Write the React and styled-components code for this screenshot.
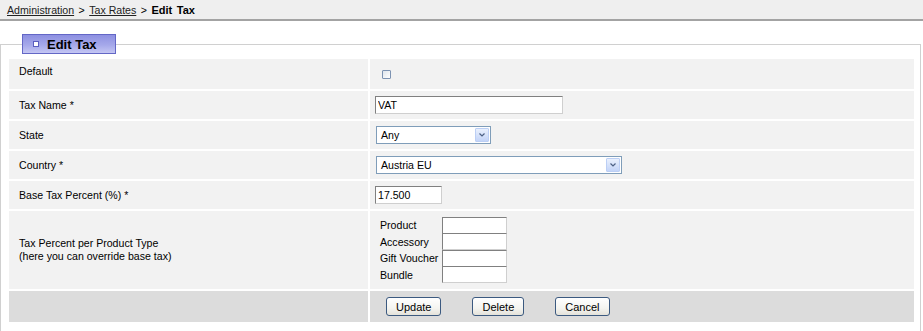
import React from "react";
import styled, { createGlobalStyle } from "styled-components";

const GlobalStyle = createGlobalStyle`
  body {
    margin: 0;
    background: #fff;
    font-family: "Liberation Sans", Arial, sans-serif;
    font-size: 10.6px;
    color: #000;
  }
`;

const Breadcrumb = styled.div`
  height: 17px;
  padding: 2px 0 0 7px;
  line-height: 17px;
  background: #efefef;
  border-bottom: 2px solid #a3a3a3;
  font-size: 10.6px;
  word-spacing: 1.5px;
  color: #000;
`;

const Crumb = styled.a`
  color: #222;
  text-decoration: underline;
  word-spacing: 0;
`;

const Current = styled.b`
  font-weight: bold;
  font-size: 11px;
`;

const Fieldset = styled.fieldset`
  margin: 13px 2px 0 0;
  padding: 0 6px 40px 8px;
  border: 1px solid #d0d0d0;
  min-width: 0;
`;

const Legend = styled.legend`
  box-sizing: border-box;
  display: flex;
  align-items: center;
  gap: 8px;
  width: 94px;
  height: 20px;
  margin-left: 13px;
  padding: 0 0 0 10px;
  border: 1px solid #6367c6;
  background: linear-gradient(to bottom, #8d90e1 0%, #a5a8ea 55%, #c4c6f3 100%);
  font-size: 13px;
  font-weight: bold;
  color: #000;
`;

const LegendIcon = styled.span`
  width: 4px;
  height: 4px;
  border: 1px solid #5a5ebf;
  background: #fff;
`;

const Form = styled.div`
  display: flex;
  flex-direction: column;
  gap: 2px;
  margin-top: 5px;
`;

const Row = styled.div`
  display: grid;
  grid-template-columns: 359px 1fr;
  gap: 2px;
  height: ${(p) => p.$height}px;
`;

const Cell = styled.div`
  display: flex;
  align-items: center;
  background: ${(p) => (p.$footer ? "#dcdcdc" : "#f2f2f2")};
`;

const LabelCell = styled(Cell)`
  padding: 0 0 ${(p) => p.$lift || 0}px 10px;
  line-height: 13px;
`;

const ValueCell = styled(Cell)`
  padding-left: ${(p) => p.$indent || 5}px;
`;

const Checkbox = styled.span`
  box-sizing: border-box;
  width: 9px;
  height: 9px;
  margin-left: 7px;
  border: 1px solid #7d93b2;
  border-radius: 1px;
  background: linear-gradient(135deg, #dfe5ec, #ffffff);
`;

const TextInput = styled.input`
  box-sizing: border-box;
  width: ${(p) => p.$width}px;
  height: ${(p) => p.$h || 18}px;
  margin: 0;
  padding: 0 2px;
  border-width: 1px;
  border-style: solid;
  border-color: #808080 #cfcfcf #cfcfcf #808080;
  background: #fff;
  font-family: inherit;
  font-size: 10.6px;
  color: #000;
  outline: none;
`;

const Select = styled.div`
  box-sizing: border-box;
  display: flex;
  align-items: center;
  width: ${(p) => p.$width}px;
  height: 18px;
  margin-left: 1px;
  border: 1px solid #7f9db9;
  background: #fff;
`;

const SelectText = styled.span`
  flex: 1;
  padding-left: 4px;
`;

const SelectArrow = styled.span`
  box-sizing: border-box;
  display: flex;
  align-items: center;
  justify-content: center;
  width: 14px;
  height: 14px;
  margin-right: 1px;
  border: 1px solid #bccff5;
  border-radius: 1px;
  background: linear-gradient(to bottom, #e9f0fd, #c3d4f8);
`;

const TypeGrid = styled.div`
  display: grid;
  grid-template-columns: 62px 65px;
  grid-auto-rows: 16.5px;
  align-items: center;
`;

const TypeLabel = styled.span`
  white-space: nowrap;
`;

const Buttons = styled.div`
  display: flex;
  gap: 31px;
`;

const Button = styled.button`
  box-sizing: border-box;
  height: 19px;
  padding: 0 9px;
  border: 1px solid #3c5a80;
  border-radius: 3px;
  background: linear-gradient(to bottom, #ffffff 0%, #f4f4f0 60%, #e4e2da 100%);
  font-family: inherit;
  font-size: 11px;
  color: #000;
`;

const Arrow = () => (
  <SelectArrow>
    <svg width="6" height="4" viewBox="0 0 6 4">
      <path d="M0.5 0.5 L3 3 L5.5 0.5" fill="none" stroke="#4d6185" strokeWidth="1.2" />
    </svg>
  </SelectArrow>
);

const productTypes = ["Product", "Accessory", "Gift Voucher", "Bundle"];

export default function App() {
  return (
    <>
      <GlobalStyle />
      <Breadcrumb>
        <Crumb>Administration</Crumb> &gt; <Crumb>Tax Rates</Crumb> &gt;{" "}
        <Current>Edit Tax</Current>
      </Breadcrumb>
      <Fieldset>
        <Legend>
          <LegendIcon />
          Edit Tax
        </Legend>
        <Form>
          <Row $height={30}>
            <LabelCell $lift={6}>Default</LabelCell>
            <ValueCell>
              <Checkbox />
            </ValueCell>
          </Row>
          <Row $height={28}>
            <LabelCell>Tax Name *</LabelCell>
            <ValueCell>
              <TextInput $width={188} defaultValue="VAT" />
            </ValueCell>
          </Row>
          <Row $height={28}>
            <LabelCell>State</LabelCell>
            <ValueCell>
              <Select $width={115}>
                <SelectText>Any</SelectText>
                <Arrow />
              </Select>
            </ValueCell>
          </Row>
          <Row $height={28}>
            <LabelCell>Country *</LabelCell>
            <ValueCell>
              <Select $width={246}>
                <SelectText>Austria EU</SelectText>
                <Arrow />
              </Select>
            </ValueCell>
          </Row>
          <Row $height={28}>
            <LabelCell>Base Tax Percent (%) *</LabelCell>
            <ValueCell>
              <TextInput $width={67} defaultValue="17.500" />
            </ValueCell>
          </Row>
          <Row $height={78}>
            <LabelCell>
              Tax Percent per Product Type
              <br />
              (here you can override base tax)
            </LabelCell>
            <ValueCell $indent={10}>
              <TypeGrid>
                {productTypes.map((t) => (
                  <React.Fragment key={t}>
                    <TypeLabel>{t}</TypeLabel>
                    <TextInput $width={65} $h={17} />
                  </React.Fragment>
                ))}
              </TypeGrid>
            </ValueCell>
          </Row>
          <Row $height={31}>
            <Cell $footer />
            <ValueCell $footer $indent={16}>
              <Buttons>
                <Button>Update</Button>
                <Button>Delete</Button>
                <Button>Cancel</Button>
              </Buttons>
            </ValueCell>
          </Row>
        </Form>
      </Fieldset>
    </>
  );
}
